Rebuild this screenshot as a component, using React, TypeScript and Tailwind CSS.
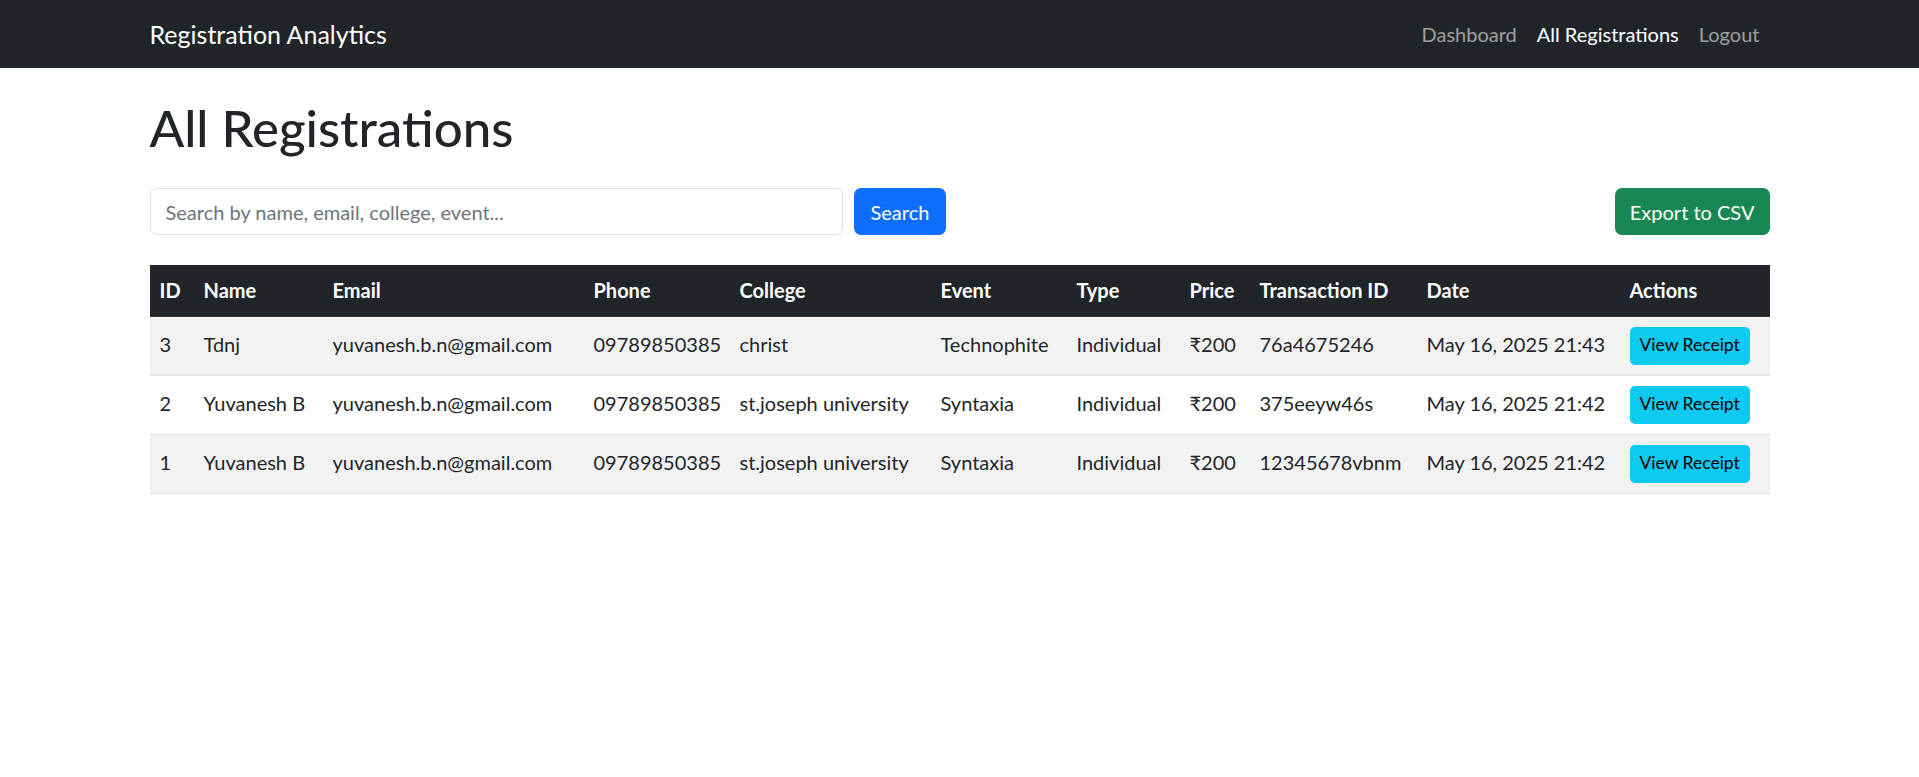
import { useState } from 'react';

interface Registration {
    id: number;
    name: string;
    email: string;
    phone: string;
    college: string;
    event: string;
    type: string;
    price: string;
    txn: string;
    date: string;
}

const registrations: Registration[] = [
    { id: 3, name: 'Tdnj', email: 'yuvanesh.b.n@gmail.com', phone: '09789850385', college: 'christ', event: 'Technophite', type: 'Individual', price: '₹200', txn: '76a4675246', date: 'May 16, 2025 21:43' },
    { id: 2, name: 'Yuvanesh B', email: 'yuvanesh.b.n@gmail.com', phone: '09789850385', college: 'st.joseph university', event: 'Syntaxia', type: 'Individual', price: '₹200', txn: '375eeyw46s', date: 'May 16, 2025 21:42' },
    { id: 1, name: 'Yuvanesh B', email: 'yuvanesh.b.n@gmail.com', phone: '09789850385', college: 'st.joseph university', event: 'Syntaxia', type: 'Individual', price: '₹200', txn: '12345678vbnm', date: 'May 16, 2025 21:42' },
];

const columns = [
    { label: 'ID', width: 'w-[44px]' },
    { label: 'Name', width: 'w-[129px]' },
    { label: 'Email', width: 'w-[261px]' },
    { label: 'Phone', width: 'w-[146px]' },
    { label: 'College', width: 'w-[201px]' },
    { label: 'Event', width: 'w-[136px]' },
    { label: 'Type', width: 'w-[113px]' },
    { label: 'Price', width: 'w-[70px]' },
    { label: 'Transaction ID', width: 'w-[167px]' },
    { label: 'Date', width: 'w-[203px]' },
    { label: 'Actions', width: 'w-[150px]' },
];

export default function App() {
    const [query, setQuery] = useState('');

    return (
        <div className="min-h-[777px] bg-white text-[#212529] font-['Lato','Noto_Sans',sans-serif] text-[20px]">
            {/* Navbar */}
            <nav className="bg-[#212529] h-[68px]">
                <div className="mx-auto w-[1620px] h-full flex items-center justify-between">
                    <a href="#" className="text-white text-[25px] leading-none">Registration Analytics</a>
                    <div className="flex items-center">
                        <a href="#" className="px-[10px] text-white/55 hover:text-white/75">Dashboard</a>
                        <a href="#" className="px-[10px] text-white">All Registrations</a>
                        <a href="#" className="px-[10px] text-white/55 hover:text-white/75">Logout</a>
                    </div>
                </div>
            </nav>

            <main className="mx-auto w-[1620px] pt-[30px]">
                <h1 className="text-[51px] font-medium leading-[60px] mb-[30px]">All Registrations</h1>

                <div className="flex items-center justify-between mb-[30px]">
                    <form className="flex items-center gap-[11px]" onSubmit={(e) => e.preventDefault()}>
                        <input
                            value={query}
                            onChange={(e) => setQuery(e.target.value)}
                            placeholder="Search by name, email, college, event..."
                            className="w-[693px] h-[47px] px-[15px] rounded-[7px] border border-[#dee2e6] placeholder:text-[#6c757d] outline-none focus:border-[#86b7fe]"
                        />
                        <button type="submit" className="h-[47px] px-[17px] rounded-[7px] bg-[#0d6efd] text-white hover:bg-[#0b5ed7]">
                            Search
                        </button>
                    </form>
                    <button className="h-[47px] px-[15px] rounded-[7px] bg-[#198754] text-white hover:bg-[#157347]">
                        Export to CSV
                    </button>
                </div>

                <table className="w-full table-fixed border-collapse text-left">
                    <thead>
                        <tr className="bg-[#212529] text-white">
                            {columns.map((col) => (
                                <th key={col.label} className={`${col.width} h-[51px] px-[10px] font-bold whitespace-nowrap border-b border-[#373b3e]`}>
                                    {col.label}
                                </th>
                            ))}
                        </tr>
                    </thead>
                    <tbody>
                        {registrations.map((r, i) => (
                            <tr key={r.id} className={`border-b border-[#dee2e6] ${i % 2 === 0 ? 'bg-[#f2f2f2]' : 'bg-white'}`}>
                                <td className="h-[59px] px-[10px] pb-[3px]">{r.id}</td>
                                <td className="px-[10px] pb-[3px] whitespace-nowrap">{r.name}</td>
                                <td className="px-[10px] pb-[3px] whitespace-nowrap">{r.email}</td>
                                <td className="px-[10px] pb-[3px]">{r.phone}</td>
                                <td className="px-[10px] pb-[3px] whitespace-nowrap">{r.college}</td>
                                <td className="px-[10px] pb-[3px]">{r.event}</td>
                                <td className="px-[10px] pb-[3px]">{r.type}</td>
                                <td className="px-[10px] pb-[3px]">{r.price}</td>
                                <td className="px-[10px] pb-[3px]">{r.txn}</td>
                                <td className="px-[10px] pb-[3px] whitespace-nowrap">{r.date}</td>
                                <td className="px-[10px]">
                                    <button className="h-[38px] px-[10px] rounded-[5px] bg-[#0dcaf0] text-black text-[17.5px] whitespace-nowrap hover:bg-[#31d2f2]">
                                        View Receipt
                                    </button>
                                </td>
                            </tr>
                        ))}
                    </tbody>
                </table>
            </main>
        </div>
    );
}
